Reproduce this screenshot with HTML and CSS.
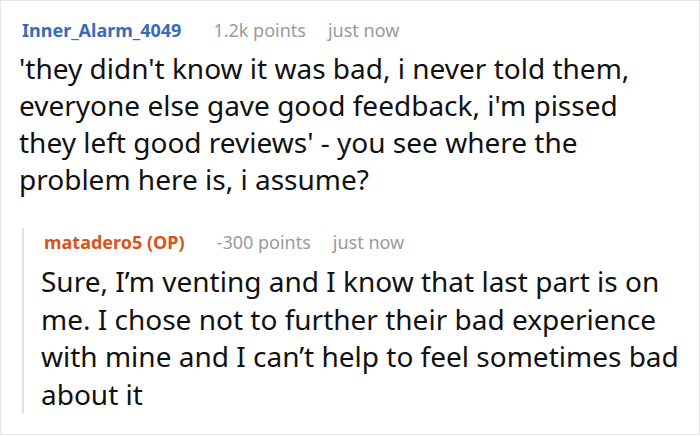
FILE: index.html
```html
<!DOCTYPE html>
<html lang="en">
<head>
<meta charset="UTF-8">
<title>Comments</title>
<link rel="stylesheet" href="styles.css">
</head>
<body>
    <div class="thread">
        <div class="comment">
            <div class="meta">
                <span class="author">Inner_Alarm_4049</span>
                <span class="points">1.2k points</span>
                <span class="time">just now</span>
            </div>
            <p class="body">'they didn't know it was bad, i never told them, everyone else gave good feedback, i'm pissed they left good reviews' - you see where the problem here is, i assume?</p>

            <div class="replies">
                <div class="comment">
                    <div class="meta">
                        <span class="author op">matadero5 (OP)</span>
                        <span class="points">-300 points</span>
                        <span class="time">just now</span>
                    </div>
                    <p class="body">Sure, I’m venting and I know that last part is on me. I chose not to further their bad experience with mine and I can’t help to feel sometimes bad about it</p>
                </div>
            </div>
        </div>
    </div>
</body>
</html>
```

FILE: styles.css
```css
body {
    margin: 0;
    background-color: #ffffff;
    font-family: "Noto Sans", "Open Sans", sans-serif;
}
.thread {
    height: 435px;
    box-sizing: border-box;
    border: 1px solid #e6e6e6;
    padding: 17px 20px 0 21px;
}
.meta {
    display: flex;
    gap: 22px;
    font-size: 18px;
    line-height: 24px;
}
.author {
    color: #3a6bb8;
    font-weight: bold;
    margin-right: 10px;
}
.author.op {
    color: #d9541a;
}
.points, .time {
    color: #9a9a9a;
}
.body {
    margin: 8px 0 0 -3px;
    font-size: 28px;
    line-height: 37px;
    color: #111;
}
.replies {
    margin-top: 30px;
    border-left: 2px solid #e2e2e2;
    padding: 2px 0 0 20px;
}
.replies .body {
    line-height: 37.5px;
    margin-top: 9px;
}
```
